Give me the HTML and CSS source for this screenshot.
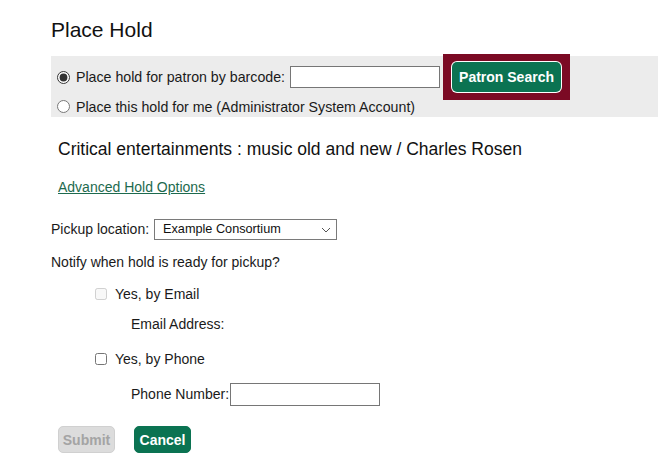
FILE: index.html
```html
<!DOCTYPE html>
<html>
<head>
<meta charset="utf-8">
<link rel="stylesheet" href="styles.css">
</head>
<body>
<div class="page">
  <h1 class="title">Place Hold</h1>
  <div class="patron-box">
    <div class="row row-first">
      <label class="radio-label"><input type="radio" name="who" checked> Place hold for patron by barcode:</label>
      <input type="text" class="barcode">
      <span class="highlight"><button class="btn btn-green search-btn">Patron Search</button></span>
    </div>
    <div class="row row-second">
      <label class="radio-label"><input type="radio" name="who"> Place this hold for me (Administrator System Account)</label>
    </div>
  </div>
  <div class="record-title">Critical entertainments : music old and new / Charles Rosen</div>
  <div class="adv"><a href="#">Advanced Hold Options</a></div>
  <div class="pickup">Pickup location: <span class="select-wrap"><select class="pickup-select"><option>Example Consortium</option></select><svg class="chev" width="10" height="6" viewBox="0 0 10 6"><path d="M1 1 L5 5 L9 1" fill="none" stroke="#555" stroke-width="1"/></svg></span></div>
  <div class="notify">Notify when hold is ready for pickup?</div>
  <div class="opt opt-email"><input type="checkbox" disabled> <span>Yes, by Email</span></div>
  <div class="sub sub-email">Email Address:</div>
  <div class="opt opt-phone"><input type="checkbox"> <span>Yes, by Phone</span></div>
  <div class="sub sub-phone">Phone Number:<input type="text" class="phone"></div>
  <div class="actions">
    <button class="btn btn-disabled" disabled>Submit</button>
    <button class="btn btn-green">Cancel</button>
  </div>
</div>
</body>
</html>
```
FILE: styles.css
```css
html, body {
  margin: 0;
  padding: 0;
  background: #fff;
}
body {
  font-family: "Liberation Sans", Arial, sans-serif;
  font-size: 14px;
  color: #1a1a1a;
}
.page {
  padding: 0 0 0 51px;
}
.title {
  font-size: 21px;
  font-weight: normal;
  margin: 0;
  padding-top: 18px;
  line-height: 24px;
  color: #111;
}
.patron-box {
  background: #ececec;
  margin-top: 14px;
  height: 61px;
}
.row {
  display: flex;
  align-items: center;
}
.row-first {
  height: 42px;
}
.row-second {
  height: 17px;
}
.radio-label {
  display: flex;
  align-items: center;
  font-size: 14.2px;
}
.radio-label input {
  margin: 0 6px 0 6px;
  width: 13px;
  height: 13px;
  accent-color: #333;
}
.barcode {
  margin-left: 5px;
  width: 150px;
  height: 22px;
  box-sizing: border-box;
  border: 1px solid #767676;
  padding: 0;
}
.highlight {
  display: inline-block;
  margin-left: 3px;
  background: #7b0a24;
  padding: 8px 9px;
  line-height: 0;
}
.btn {
  font-family: "Liberation Sans", Arial, sans-serif;
  font-weight: bold;
  font-size: 14px;
  border-radius: 5px;
  cursor: pointer;
}
.btn-green {
  background: #0b7352;
  color: #fff;
  border: 1px solid #0b7352;
}
.search-btn {
  height: 30px;
  width: 109px;
  padding: 0;
  box-shadow: 0 0 0 1px #fff;
  border: none;
}
.record-title {
  font-size: 17.5px;
  padding-left: 7px;
  margin-top: 21px;
  line-height: 22px;
  color: #111;
}
.adv {
  padding-left: 7px;
  margin-top: 18px;
  line-height: 18px;
}
.adv a {
  color: #1d6a4e;
  text-decoration: underline;
}
.pickup {
  margin-top: 22px;
  display: flex;
  align-items: center;
  height: 22px;
}
.select-wrap {
  position: relative;
  display: inline-block;
  margin-left: 5px;
  line-height: 0;
}
.pickup-select {
  appearance: none;
  -webkit-appearance: none;
  width: 183px;
  height: 21px;
  font-family: "Liberation Sans", Arial, sans-serif;
  font-size: 12.7px;
  border: 1px solid #7a7a7a;
  border-radius: 0;
  background: #fff;
  padding: 0 0 0 8px;
  color: #111;
}
.chev {
  position: absolute;
  right: 6px;
  top: 8px;
  pointer-events: none;
}
.notify {
  margin-top: 12px;
  line-height: 20px;
}
.opt {
  display: flex;
  align-items: center;
  padding-left: 44px;
  height: 20px;
}
.opt input {
  margin: 0 8px 0 0;
  width: 12px;
  height: 12px;
}
.opt-email {
  margin-top: 12px;
}
.sub {
  padding-left: 80px;
  display: flex;
  align-items: center;
}
.sub-email {
  margin-top: 10px;
  height: 20px;
}
.opt-phone {
  margin-top: 15px;
}
.sub-phone {
  margin-top: 13px;
  height: 24px;
}
.phone {
  width: 150px;
  height: 23px;
  box-sizing: border-box;
  border: 1px solid #767676;
  padding: 0;
  margin: 0 0 0 1px;
}
.actions {
  margin-top: 20px;
  padding-left: 7px;
  display: flex;
  gap: 19px;
}
.actions .btn {
  width: 57px;
  height: 27px;
  padding: 0;
}
.btn-disabled {
  background: #dcdcdc;
  color: #a4a4a4;
  border: 1px solid #d0d0d0;
  cursor: default;
}
```
